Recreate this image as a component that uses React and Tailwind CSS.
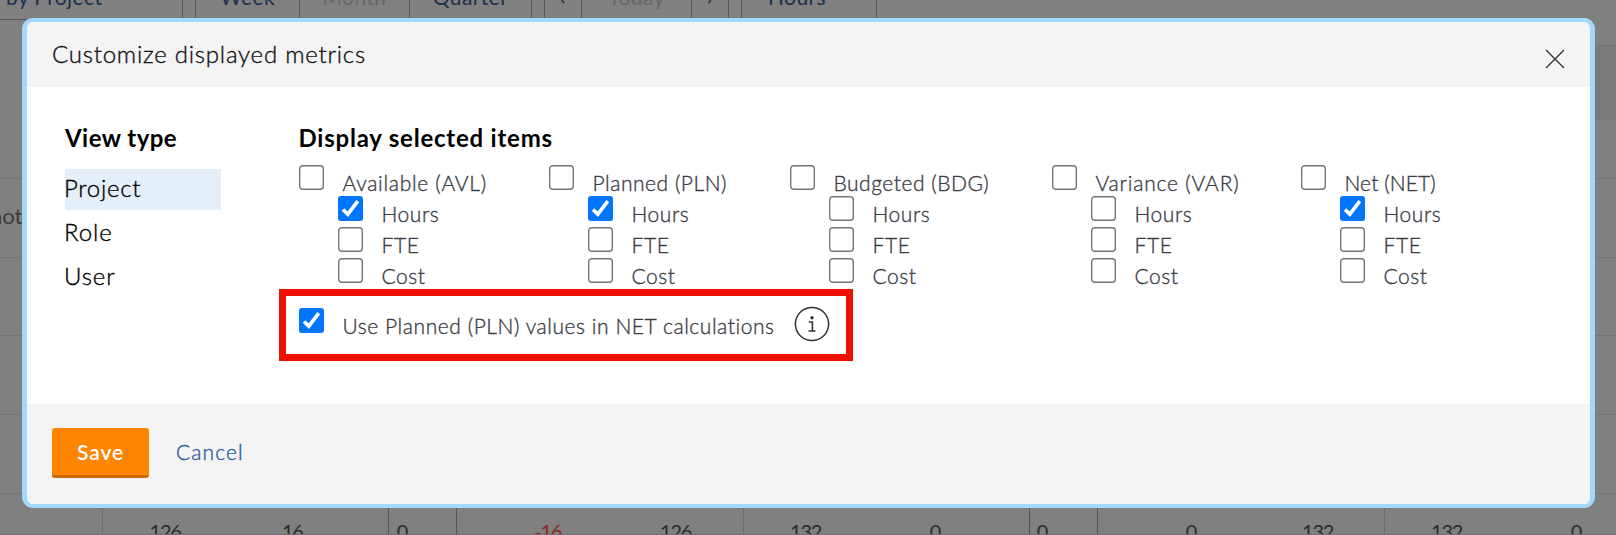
import React from "react";

const columns = [
  { label: "Available (AVL)", width: "w-[250px]", hours: true, tracking: "tracking-[0.7px]" },
  { label: "Planned (PLN)", width: "w-[241px]", hours: true, tracking: "tracking-[0.53px]" },
  { label: "Budgeted (BDG)", width: "w-[262px]", hours: false, tracking: "tracking-[0.52px]" },
  { label: "Variance (VAR)", width: "w-[249px]", hours: false, tracking: "tracking-[0.8px]" },
  { label: "Net (NET)", width: "w-[200px]", hours: true, tracking: "tracking-[0.1px]" },
];

function Checkbox({ checked }) {
  return (
    <svg width="25" height="25" viewBox="0 0 25 25" className="shrink-0" role="checkbox" aria-checked={!!checked}>
      {checked ? (
        <>
          <rect width="25" height="25" rx="3" fill="#0075ff" />
          <path d="M5 13.4 L9.8 18.2 L19.8 5.2" fill="none" stroke="#fff" strokeWidth="3.6" />
        </>
      ) : (
        <rect x="0.7" y="0.7" width="23.6" height="23.6" rx="3" fill="#fff" stroke="#767676" strokeWidth="1.4" />
      )}
    </svg>
  );
}

function Option({ label, checked, tracking = "tracking-[0.56px]" }) {
  return (
    <label className="flex h-[31px] items-start gap-[18.5px]">
      <Checkbox checked={checked} />
      <span className={"text-[21px] leading-[36px] font-light whitespace-nowrap text-[#3a3d46] [-webkit-text-stroke:0.35px_#3a3d46] " + tracking}>{label}</span>
    </label>
  );
}

function Tool({ children, className }) {
  return (
    <div className={"flex h-5 items-start justify-center border-r border-b border-[#565656] text-[21px] leading-none tracking-[0.4px] whitespace-nowrap text-[#1c2f4f] " + className}>
      <span className="-mt-[14px]">{children}</span>
    </div>
  );
}

function Cell({ children, className }) {
  return (
    <div className={"flex h-full shrink-0 items-start text-[20px] leading-none tracking-[-1.3px] text-[#2b2b2b] " + className}>
      <span className="mt-[27px] flex-1 text-right whitespace-nowrap">{children}</span>
    </div>
  );
}

function Backdrop() {
  return (
    <div className="flex h-full flex-col bg-[#808080]">
      <div className="flex h-5 shrink-0">
        <Tool className="w-[183px] justify-start! pl-[6px]">by Project</Tool>
        <Tool className="ml-3 w-[105px] border-l">Week</Tool>
        <Tool className="w-[110px] text-[#666]!">Month</Tool>
        <Tool className="w-[122px]">Quarter</Tool>
        <Tool className="ml-3 w-[38px] border-l">‹</Tool>
        <Tool className="w-[110px] text-[#666]!">Today</Tool>
        <Tool className="w-[37px]">›</Tool>
        <Tool className="ml-3 w-[136px] justify-start! border-l pl-[26px]">Hours</Tool>
      </div>
      <div className="h-[25px] shrink-0" />
      <div className="flex h-[75px] shrink-0 justify-end">
        <div className="w-[40px] border-t border-[#747474] bg-[#797979]" />
      </div>
      <div className="h-[59px] shrink-0 border-b border-[#747474]" />
      <div className="h-[79px] shrink-0 border-b border-[#747474] pt-[26px] text-[22px] leading-none text-[#3a3a3a]">
        <span className="-ml-[10px]">not</span>
      </div>
      <div className="h-[78px] shrink-0 border-b border-[#747474]" />
      <div className="h-[79px] shrink-0 border-b border-[#747474]" />
      <div className="h-[79px] shrink-0 border-b border-[#747474]" />
      <div className="flex h-[41px] shrink-0 overflow-hidden border-b border-[#707070]">
        <Cell className="w-[102.5px] border-r border-[#6c6c6c]" />
        <Cell className="w-[78px]">126</Cell>
        <Cell className="w-[122px]">16</Cell>
        <Cell className="w-[86.5px] border-r border-[#555]" />
        <Cell className="w-[18px]">0</Cell>
        <Cell className="w-[50px] border-r border-[#555]" />
        <Cell className="w-[104px] text-[#8c2420]!">-16</Cell>
        <Cell className="w-[130px]">126</Cell>
        <Cell className="w-[53px] border-r border-[#6c6c6c]" />
        <Cell className="w-[77px]">132</Cell>
        <Cell className="w-[119px]">0</Cell>
        <Cell className="w-[90px] border-r border-[#555]" />
        <Cell className="w-[17px]">0</Cell>
        <Cell className="w-[51px] border-r border-[#555]" />
        <Cell className="w-[98px]">0</Cell>
        <Cell className="w-[137px]">132</Cell>
        <Cell className="w-[52px] border-r border-[#6c6c6c]" />
        <Cell className="w-[77px]">132</Cell>
        <Cell className="w-[119px]">0</Cell>
      </div>
    </div>
  );
}

export default function App() {
  return (
    <div className="relative h-[535px] w-[1616px] overflow-hidden font-['Lato',sans-serif]">
      <Backdrop />
      <div className="absolute top-[18px] left-[22px] flex h-[490px] w-[1573px] flex-col overflow-hidden rounded-[11px] border-x-5 border-y-4 border-[#a0d9fb] bg-white">
        <header className="flex h-[65px] shrink-0 items-start justify-between bg-[#f4f4f4] pl-[25px]">
          <h1 className="text-[24px] leading-[63px] font-light tracking-[0.77px] text-[#111] [-webkit-text-stroke:0.35px_#111]">Customize displayed metrics</h1>
          <svg width="20" height="20" viewBox="0 0 20 20" className="mt-[27px] mr-[25px]" aria-label="Close">
            <path d="M1 1 L19 19 M19 1 L1 19" stroke="#333" strokeWidth="1.4" fill="none" />
          </svg>
        </header>

        <main className="flex h-[317px] shrink-0 pl-[38px]">
          <nav className="w-[156px] pt-[37px] text-[24px] font-light text-black">
            <h2 className="h-[45px] leading-[27px] font-bold tracking-[0.45px] whitespace-nowrap">View type</h2>
            <div className="h-[41px] bg-[#e5effa] leading-[38px] tracking-[0.7px] [-webkit-text-stroke:0.35px_#000]"><span className="-ml-px">Project</span></div>
            <div className="mt-[3px] h-[40px] leading-[38px] tracking-[0.9px] [-webkit-text-stroke:0.35px_#000]"><span className="-ml-px">Role</span></div>
            <div className="mt-[4px] h-[40px] leading-[38px] tracking-[0.9px] [-webkit-text-stroke:0.35px_#000]"><span className="-ml-px">User</span></div>
          </nav>

          <section className="ml-[58px] pt-[37px]">
            <h2 className="ml-[19.5px] h-[41px] text-[24px] leading-[27px] font-bold tracking-[0.78px] text-black">Display selected items</h2>
            <div className="ml-[20px] flex h-[124px]">
              {columns.map((c) => (
                <div key={c.label} className={"shrink-0 " + c.width}>
                  <Option label={c.label} tracking={c.tracking} />
                  <div className="pl-[39px]">
                    <Option label="Hours" checked={c.hours} />
                    <Option label="FTE" />
                    <Option label="Cost" />
                  </div>
                </div>
              ))}
            </div>
            <div className="flex h-[72px] w-[574px] items-start border-7 border-[#ee1100] pt-[12px] pl-[13px]">
              <div className="w-[495px]">
                <Option label="Use Planned (PLN) values in NET calculations" checked />
              </div>
              <svg width="36" height="36" viewBox="0 0 36 36" className="-mt-[2px] shrink-0" aria-label="Information">
                <circle cx="18" cy="18" r="16.6" fill="none" stroke="#333" strokeWidth="1.5" />
                <circle cx="18" cy="11.7" r="1.7" fill="#333" />
                <path d="M14.8 16 H18.4 V25 M14.5 25 H21.5" fill="none" stroke="#333" strokeWidth="1.6" />
              </svg>
            </div>
          </section>
        </main>

        <footer className="flex h-[100px] shrink-0 items-start bg-[#f4f4f4] pt-[24px] pl-[25px] text-[21px]">
          <button className="h-[50px] w-[97px] rounded-[3px] border-b-3 border-[#cc6900] bg-[#ff8400] leading-[47px] font-semibold tracking-[0.9px] text-white">Save</button>
          <a className="ml-[27px] leading-[48px] font-light tracking-[1.1px] text-[#2f5d9f] [-webkit-text-stroke:0.4px_#2f5d9f]">Cancel</a>
        </footer>
      </div>
    </div>
  );
}
